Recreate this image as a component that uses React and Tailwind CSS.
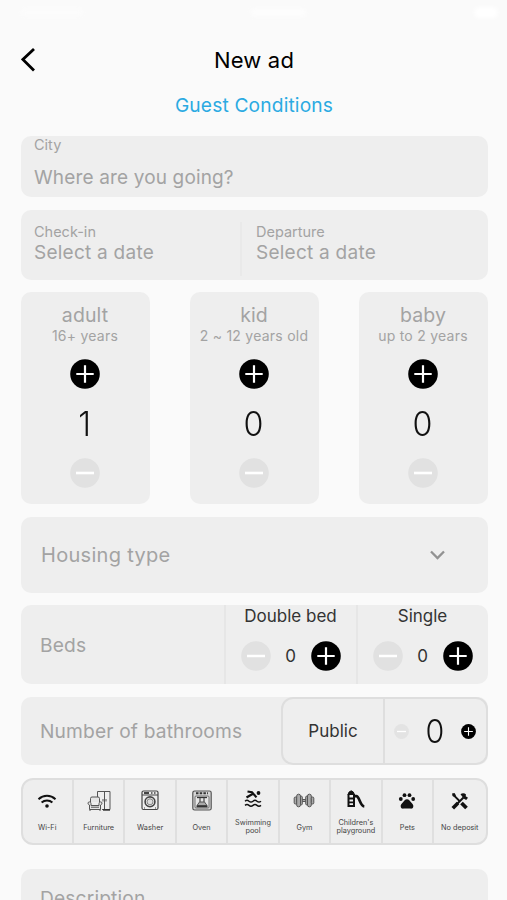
import React from "react";

function RoundButton({ kind, size = 30, faint = false }) {
  const plus = kind === "plus";
  return (
    <svg width={size} height={size} viewBox="0 0 30 30" className="block shrink-0">
      <circle cx="15" cy="15" r="14.8" fill={plus ? "#000" : faint ? "#e3e3e3" : "#e1e1e1"} />
      <path
        d={plus ? "M6.3 15h17.4M15 6.3v17.4" : "M6 15h18"}
        stroke="#fff"
        strokeWidth={plus ? 2.2 : 2.6}
        fill="none"
      />
    </svg>
  );
}

const guests = [
  { name: "adult", note: "16+ years", count: 1 },
  { name: "kid", note: "2 ~ 12 years old", count: 0 },
  { name: "baby", note: "up to 2 years", count: 0 },
];

function GuestCard({ name, note, count }) {
  return (
    <div className="flex h-[212px] w-[129px] flex-col items-center rounded-[10px] bg-[#eeeeee]">
      <div className="mt-[11px] text-[19.500px] leading-[24px] tracking-[0.100px] text-[#a3a3a3]">{name}</div>
      <div className="text-[14px] leading-[18px] tracking-[0.250px] whitespace-nowrap text-[#a3a3a3]">{note}</div>
      <div className="mt-[13.500px]">
        <RoundButton kind="plus" />
      </div>
      <div className="mt-[15.500px] h-[40px] text-[34px] leading-[40px] font-light text-[#111]">
        <span className="inline-block scale-x-95">{count}</span>
      </div>
      <div className="mt-[13.500px]">
        <RoundButton kind="minus" />
      </div>
    </div>
  );
}

function BedCounter({ label, className }) {
  return (
    <div className={"flex flex-col items-center border-l-2 border-[#e6e6e6] " + className}>
      <div className="text-[17px] leading-[22px] text-[#333]">{label}</div>
      <div className="mt-[13.500px] flex items-center">
        <RoundButton kind="minus" />
        <span className="w-[40px] text-center text-[17px] leading-[30px] text-[#333]">0</span>
        <RoundButton kind="plus" />
      </div>
    </div>
  );
}

const WifiIcon = () => (
  <svg width="20" height="16" viewBox="0 0 20 16" fill="none" stroke="#111" strokeWidth="2">
    <path d="M1.5 6.2C6.4 1.6 13.6 1.6 18.5 6.2M4.6 9.6c3.1-2.8 7.7-2.8 10.8 0" />
    <circle cx="10" cy="13" r="1.8" fill="#111" stroke="none" />
  </svg>
);

const FurnitureIcon = () => (
  <svg width="24" height="22" viewBox="0 0 24 22" fill="none" stroke="#555" strokeWidth="1">
    <path d="M10.500 7V1.500h12.500v18h-8M17.500 1.500v18M16 9v2.500M19 9v2.500" />
    <path d="M16 20h7" stroke="#222" strokeWidth="1.300" />
    <path
      d="M3.500 12V8.500q0-1.500 1.500-1.500h6q1.500 0 1.500 1.500V12M2.500 19.500v-4.500q-1.500-.5-1.500-1.800t1.500-1.300q1.500 0 1.500 1.800v1.800h8v-1.800q0-1.800 1.500-1.800t1.500 1.300-1.500 1.800v4.500zM4 17.200h8M3 19.500v1.500M13 19.500v1.500"
      fill="#e6e6e6"
    />
  </svg>
);

const WasherIcon = () => (
  <svg width="18" height="21" viewBox="0 0 18 21" fill="none" stroke="#444" strokeWidth="1.200">
    <rect x="1" y="1" width="16" height="18.500" rx="1.500" />
    <path d="M1 5h16" strokeWidth="1" />
    <path d="M3 3h5" strokeWidth="2" />
    <path d="M10 3h1.500M13 3h1.500" strokeWidth="1.500" />
    <circle cx="9" cy="11.800" r="4.900" strokeWidth="1.600" />
    <circle cx="9" cy="11.800" r="3" strokeWidth=".6" fill="#ddd" />
    <path d="M3 18h1M14 18h1" />
  </svg>
);

const OvenIcon = () => (
  <svg width="20" height="21" viewBox="0 0 20 21" fill="none" stroke="#555" strokeWidth="1">
    <rect x=".8" y="1" width="18.400" height="19" rx="1.800" strokeWidth="1.200" fill="#d6d6d6" />
    <path d="M4 3.300h12" stroke="#333" strokeWidth="2" strokeDasharray="2.500 1.200" />
    <rect x="3" y="6" width="14" height="12" rx="1" fill="#e6e6e6" strokeWidth=".8" />
    <path d="M5 7.500h10" stroke="#333" strokeWidth="1.300" />
    <path d="M8 8v4M12 8v4" strokeWidth="1.300" />
    <path d="M7.500 12h5l2.500 3.500H5z" fill="#aaa" />
    <path d="M4.500 16.500h11" stroke="#333" strokeWidth="1.800" />
  </svg>
);

const SwimIcon = () => (
  <svg width="18" height="18" viewBox="0 0 18 18" fill="none" stroke="#111">
    <circle cx="14.500" cy="3" r="1.900" fill="#111" stroke="none" />
    <path d="M3.500 1.500 8 2.200l4.500 5.200M2.500 7.500 8.500 4" strokeWidth="2.200" />
    <path d="M1 11.200q2-1.700 4 0t4 0 4 0 4 0M1 15.400q2-1.700 4 0t4 0 4 0 4 0" strokeWidth="1.400" />
  </svg>
);

const GymIcon = () => (
  <svg width="22" height="15" viewBox="0 0 22 15" fill="#aaa" stroke="#555" strokeWidth="1">
    <path d="M7.500 6.500h7v2h-7z" />
    <rect x="1.200" y="4" width="2.500" height="7" rx="1.200" />
    <rect x="3.700" y="1.200" width="3.800" height="12.600" rx="1.800" />
    <rect x="7.500" y="3.200" width="1.800" height="8.600" rx=".9" />
    <rect x="12.700" y="3.200" width="1.800" height="8.600" rx=".9" />
    <rect x="14.500" y="1.200" width="3.800" height="12.600" rx="1.800" />
    <rect x="18.300" y="4" width="2.500" height="7" rx="1.200" />
  </svg>
);

const PlaygroundIcon = () => (
  <svg width="20" height="18" viewBox="0 0 20 18" fill="none" stroke="#111">
    <path d="M2 4.500Q2.500 1.500 5.200.8q2.700.7 3.200 3.700z" fill="#111" strokeWidth="1" />
    <path d="M2.500 4v13M8 4v13" strokeWidth="2" />
    <path d="M2.500 8.500H8M2.500 12.300H8M2.500 16H8" strokeWidth="1.800" />
    <path d="M8.500 6.200h1.800c3.200 0 3.700 9.800 8 10.300" strokeWidth="2.700" />
  </svg>
);

const PawIcon = () => (
  <svg width="18" height="18" viewBox="0 0 18 18" fill="#111">
    <circle cx="2.800" cy="7" r="1.900" />
    <circle cx="6.500" cy="3.200" r="1.900" />
    <circle cx="11.500" cy="3.200" r="1.900" />
    <circle cx="15.200" cy="7" r="1.900" />
    <path d="M9 7.300c2 0 2.800 1.600 4 2.900s2.600 2.300 2.300 4.300c-.2 1.700-1.400 2.300-2.900 2.100-2.300-.3-4.500-.3-6.800 0-1.500.2-2.700-.4-2.900-2.100-.3-2 1.100-3 2.300-4.300s2-2.900 4-2.900z" />
  </svg>
);

const ToolsIcon = () => (
  <svg width="18" height="18" viewBox="0 0 18 18" fill="none" stroke="#111">
    <path d="M3 3.500l5.500 5.500" strokeWidth="1.800" />
    <path d="M1 1.500l2.500-.5 1.500 2.500-1.500 1.500L1.500 4z" fill="#111" stroke="none" />
    <path d="M10.500 11l5 5" strokeWidth="3.800" />
    <path d="M1.800 16.200 7 11" strokeWidth="3.600" />
    <path d="M6.500 11.500l6-6" strokeWidth="2" />
    <path d="M9.500 2.200c2-1.300 4.200-1 5.500.3l-.3 1.700 2.300 1.500-1.800 2.300-2.200-1.200L10.800 4z" fill="#111" stroke="none" />
  </svg>
);

const amenities = [
  { label: "Wi-Fi", Icon: WifiIcon },
  { label: "Furniture", Icon: FurnitureIcon },
  { label: "Washer", Icon: WasherIcon },
  { label: "Oven", Icon: OvenIcon },
  { label: "Swimming pool", Icon: SwimIcon },
  { label: "Gym", Icon: GymIcon },
  { label: "Children's playground", Icon: PlaygroundIcon },
  { label: "Pets", Icon: PawIcon },
  { label: "No deposit", Icon: ToolsIcon },
];

export default function App() {
  return (
    <div className="flex h-[900px] w-[507px] flex-col overflow-hidden bg-[#fafafa] pr-[19.500px] pl-[20.500px] font-['Inter','Liberation_Sans',sans-serif]">
      <div className="-mr-[10px] flex h-[24px] shrink-0 items-center justify-between">
        <span className="h-[7px] w-[62px] rounded-full bg-white opacity-40 blur-[2px]" />
        <span className="h-[7px] w-[55px] rounded-full bg-white opacity-70 blur-[2px]" />
        <span className="h-[11px] w-[24px] rounded-full bg-white blur-[2px]" />
      </div>

      <header className="mt-[20px] grid h-[32px] shrink-0 grid-cols-[40px_1fr_40px] items-center">
        <svg width="16" height="26" viewBox="0 0 16 26" fill="none" stroke="#000" strokeWidth="2.8">
          <path d="M13 2 1.900 12.500 13 23.500" />
        </svg>
        <h1 className="text-center text-[22px] leading-[32px] font-normal tracking-[0.200px] text-black">New ad</h1>
      </header>
      <h2 className="mt-[17px] h-[24px] shrink-0 text-center text-[19.200px] leading-[24px] tracking-[0.150px] text-[#2baae2]">
        Guest Conditions
      </h2>

      <section className="mt-[19px] h-[61px] shrink-0 rounded-[10px] bg-[#eeeeee] pl-[13.500px] text-[#a3a3a3]">
        <div className="text-[14.500px] leading-[18px]">City</div>
        <div className="mt-[11px] text-[19px] leading-[26px] tracking-[0.150px]">Where are you going?</div>
      </section>

      <section className="mt-[13px] flex h-[70px] shrink-0 items-center rounded-[10px] bg-[#eeeeee] text-[#a3a3a3]">
        <div className="-mt-[3px] w-[219px] pl-[13.500px]">
          <div className="text-[14.500px] leading-[18px]">Check-in</div>
          <div className="text-[19px] leading-[23px] tracking-[0.250px]">Select a date</div>
        </div>
        <div className="mt-[8px] h-[54px] w-[2px] bg-[#e9e9e9]" />
        <div className="-mt-[3px] pl-[14.500px]">
          <div className="text-[14.500px] leading-[18px]">Departure</div>
          <div className="text-[19px] leading-[23px] tracking-[0.250px]">Select a date</div>
        </div>
      </section>

      <section className="mt-[12px] flex shrink-0 justify-between">
        {guests.map((g) => (
          <GuestCard key={g.name} {...g} />
        ))}
      </section>

      <section className="mt-[13px] flex h-[76px] shrink-0 items-center justify-between rounded-[10px] bg-[#eeeeee] pr-[43px] pl-[20.500px] text-[#a3a3a3]">
        <span className="text-[20px] tracking-[0.300px]">Housing type</span>
        <svg width="15" height="10" viewBox="0 0 15 10" fill="none" stroke="#929292" strokeWidth="2.300">
          <path d="M1 1.500 7.500 8 14 1.500" />
        </svg>
      </section>

      <section className="mt-[12px] flex h-[79px] shrink-0 overflow-hidden rounded-[10px] bg-[#eeeeee]">
        <div className="flex w-[203px] items-center pt-[2px] pl-[19.500px] text-[19.200px] tracking-[0.150px] text-[#a3a3a3]">
          Beds
        </div>
        <BedCounter label="Double bed" className="w-[132px]" />
        <BedCounter label="Single" className="w-[132px]" />
      </section>

      <section className="mt-[13px] flex h-[68px] shrink-0 rounded-[10px] bg-[#eeeeee]">
        <div className="flex flex-1 items-center pl-[19.500px] text-[19.200px] tracking-[0.150px] whitespace-nowrap text-[#a3a3a3]">
          Number of bathrooms
        </div>
        <div className="flex w-[206.500px] rounded-[12px] border-2 border-[#dedede]">
          <div className="flex w-[102px] items-center justify-center border-r-2 border-[#dedede] pt-[1px] text-[17px] text-[#333]">
            Public
          </div>
          <div className="flex flex-1 items-center justify-between pr-[9px] pl-[9px]">
            <RoundButton kind="minus" size={15} faint />
            <span className="mt-[2px] inline-block scale-x-95 text-[32px] leading-[40px] font-light text-[#111]">0</span>
            <RoundButton kind="plus" size={15} />
          </div>
        </div>
      </section>

      <section className="mt-[12.500px] grid h-[67.500px] shrink-0 grid-cols-9 divide-x-2 divide-[#dfdfdf] rounded-[12px] border-2 border-[#dedede] bg-[#eeeeee]">
        {amenities.map(({ label, Icon }) => {
          const tall = label === "Swimming pool" || label.startsWith("Children");
          return (
            <div key={label} className="flex flex-col items-center">
              <div className={"flex h-[22px] items-center " + (tall ? "mt-[8px]" : "mt-[10px]")}>
                <Icon />
              </div>
              <div className={"flex w-[48px] justify-center text-center text-[7.300px] leading-[8.500px] text-[#444] " + (tall ? "mt-[9px]" : "mt-[12px] whitespace-nowrap")}>
                {label}
              </div>
            </div>
          );
        })}
      </section>

      <section className="mt-[24px] h-[80px] shrink-0 rounded-[10px] bg-[#eeeeee] pt-[17px] pl-[19.500px] text-[19.200px] leading-[24px] tracking-[0.150px] text-[#a3a3a3]">
        Description
      </section>
    </div>
  );
}
